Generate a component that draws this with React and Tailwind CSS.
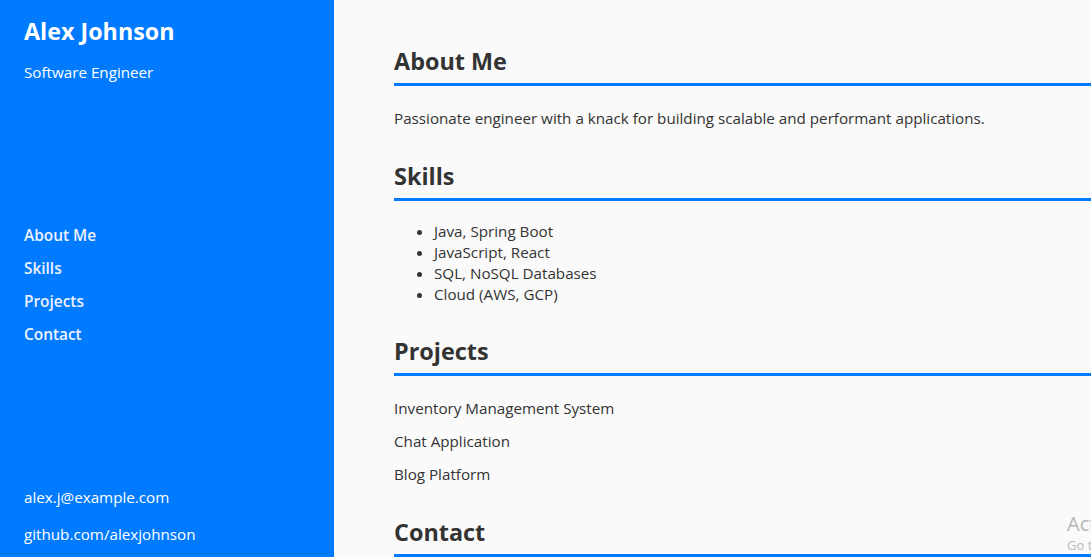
import React from "react";

export default function App() {
  return (
    <div className="relative flex h-[557px] w-full overflow-hidden font-['Open_Sans','Noto_Sans',sans-serif] text-[15.2px]">
      <aside className="flex w-[334px] shrink-0 flex-col bg-[#007bff] px-6 pt-[15px] pb-[11px] text-white">
        <h1 className="text-[23.3px] font-bold leading-[32px]">Alex Johnson</h1>
        <p className="mt-[13px] text-[15.2px] leading-[24px]">Software Engineer</p>
        <nav className="mt-[140px] flex flex-col gap-[9px] text-[15.4px] font-semibold leading-[24px] text-[#eef1ff]">
          <a href="#about">About Me</a>
          <a href="#skills">Skills</a>
          <a href="#projects">Projects</a>
          <a href="#contact">Contact</a>
        </nav>
        <div className="mt-auto flex flex-col gap-[13px] text-[15.2px] leading-[24px]">
          <span>alex.j@example.com</span>
          <span>github.com/alexjohnson</span>
        </div>
      </aside>
      <main className="relative flex-1 bg-[#fafafa] pl-[60px] pt-[45px] text-[#333333]">
        <section>
          <h2 className="border-b-[3px] border-[#007bff] pb-[6px] text-[23.4px] font-bold leading-[32px]">About Me</h2>
          <p className="mt-[20px] leading-[24px]">
            Passionate engineer with a knack for building scalable and performant applications.
          </p>
        </section>
        <section className="mt-[30px]">
          <h2 className="border-b-[3px] border-[#007bff] pb-[6px] text-[23.4px] font-bold leading-[32px]">Skills</h2>
          <ul className="mt-[20px] list-disc pl-10 leading-[21px]">
            <li>Java, Spring Boot</li>
            <li>JavaScript, React</li>
            <li>SQL, NoSQL Databases</li>
            <li>Cloud (AWS, GCP)</li>
          </ul>
        </section>
        <section className="mt-[30px]">
          <h2 className="border-b-[3px] border-[#007bff] pb-[6px] text-[23.4px] font-bold leading-[32px]">Projects</h2>
          <ul className="mt-[20px] flex flex-col gap-[9px] leading-[24px]">
            <li>Inventory Management System</li>
            <li>Chat Application</li>
            <li>Blog Platform</li>
          </ul>
        </section>
        <section className="mt-[30px]">
          <h2 className="border-b-[3px] border-[#007bff] pb-[6px] text-[23.4px] font-bold leading-[32px]">Contact</h2>
        </section>
      </main>
      <div className="pointer-events-none absolute left-[1067px] top-[511px] whitespace-nowrap text-[#b8b8b8]">
        <div className="text-[20px] leading-[26px]">Activate Windows</div>
        <div className="text-[13px] leading-[17px]">Go to Settings to activate Windows.</div>
      </div>
    </div>
  );
}
